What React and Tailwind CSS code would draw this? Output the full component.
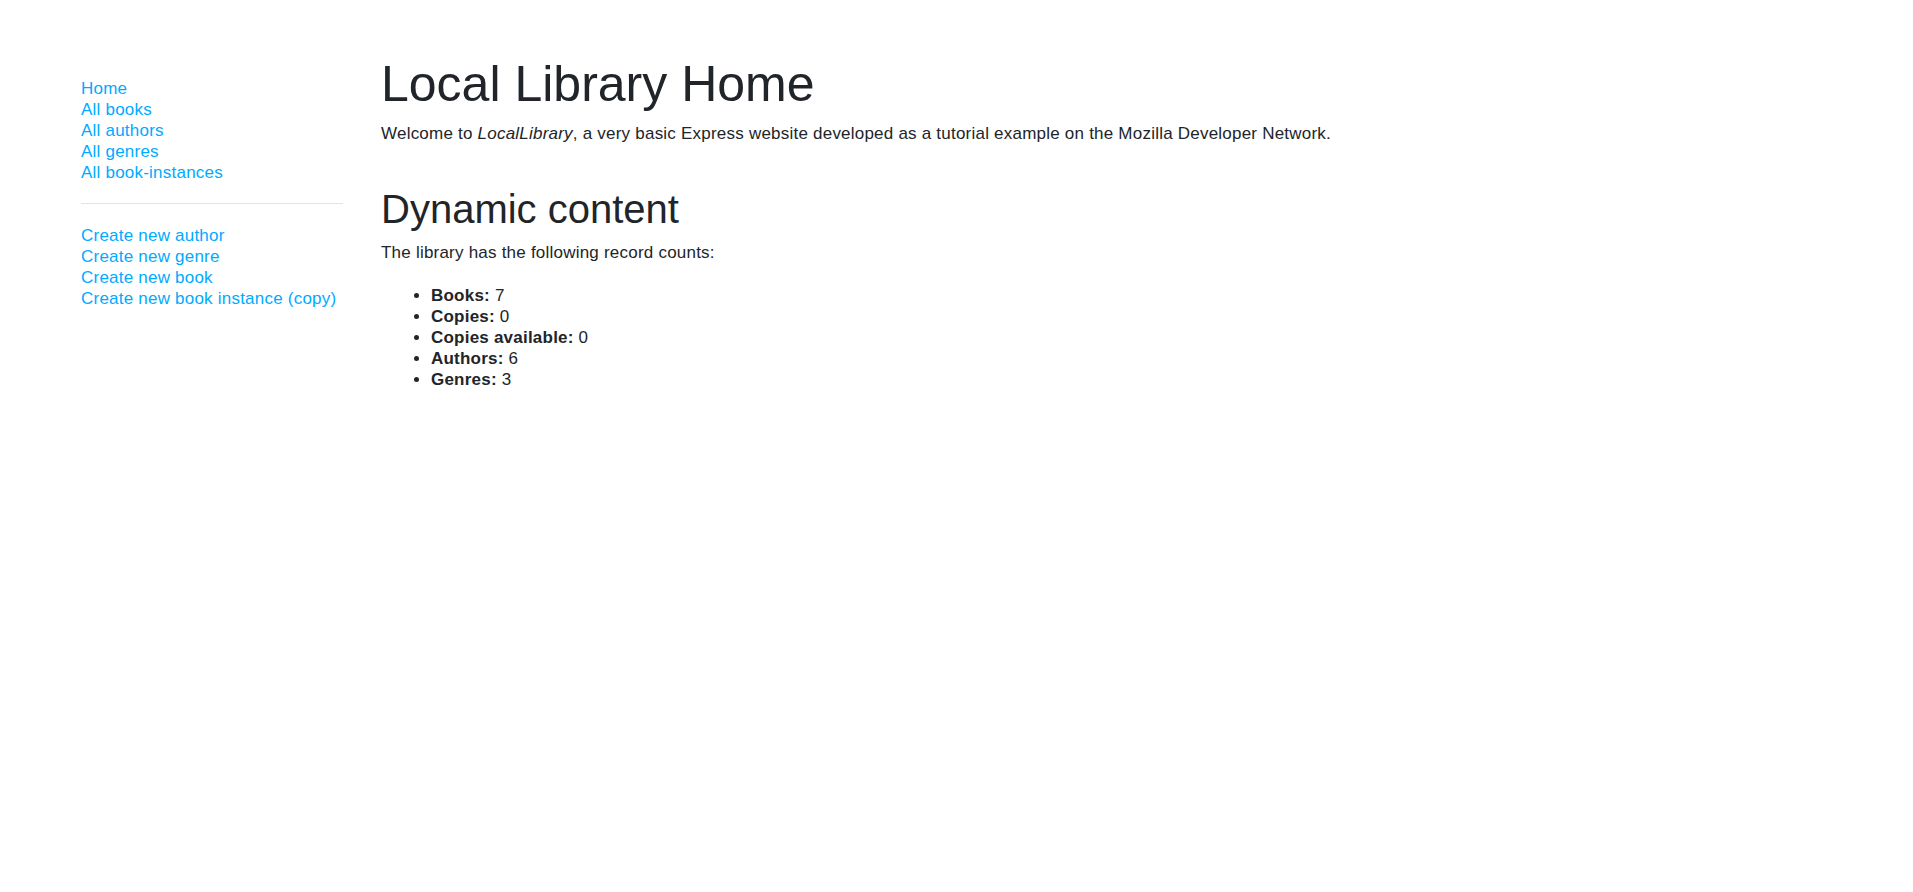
import React from "react";

const mainLinks = ["Home", "All books", "All authors", "All genres", "All book-instances"];
const createLinks = [
  "Create new author",
  "Create new genre",
  "Create new book",
  "Create new book instance (copy)",
];

const counts = [
  { label: "Books:", value: 7 },
  { label: "Copies:", value: 0 },
  { label: "Copies available:", value: 0 },
  { label: "Authors:", value: 6 },
  { label: "Genres:", value: 3 },
];

const App = () => {
  return (
    <div className="flex min-h-screen bg-white pl-[81px] font-['Liberation_Sans',Arial,sans-serif] text-[17px] leading-[21px] tracking-[0.22px] text-[#212529]">
      {/* sidebar */}
      <nav className="w-[262px] shrink-0 pt-[78px]">
        <ul>
          {mainLinks.map((l) => (
            <li key={l}>
              <a href="#" className="text-[#00aaff] hover:underline">
                {l}
              </a>
            </li>
          ))}
        </ul>
        <hr className="mt-[20px] mb-[21px] border-t border-[#e3e3e3]" />
        <ul>
          {createLinks.map((l) => (
            <li key={l}>
              <a href="#" className="text-[#00aaff] hover:underline">
                {l}
              </a>
            </li>
          ))}
        </ul>
      </nav>

      {/* content */}
      <main className="ml-[38px] flex-1">
        <h1 className="mt-[54px] mb-[9px] text-[50px] leading-[60px] font-normal tracking-normal">
          Local Library Home
        </h1>
        <p>
          Welcome to <em>LocalLibrary</em>, a very basic Express website developed as a tutorial
          example on the Mozilla Developer Network.
        </p>

        <h2 className="mt-[41px] mb-[9px] text-[40px] leading-[48px] font-normal tracking-normal">
          Dynamic content
        </h2>
        <p>The library has the following record counts:</p>
        <ul className="mt-[22px] list-disc pl-[50px]">
          {counts.map((c) => (
            <li key={c.label}>
              <strong className="font-bold">{c.label}</strong> {c.value}
            </li>
          ))}
        </ul>
      </main>
    </div>
  );
};

export default App;
